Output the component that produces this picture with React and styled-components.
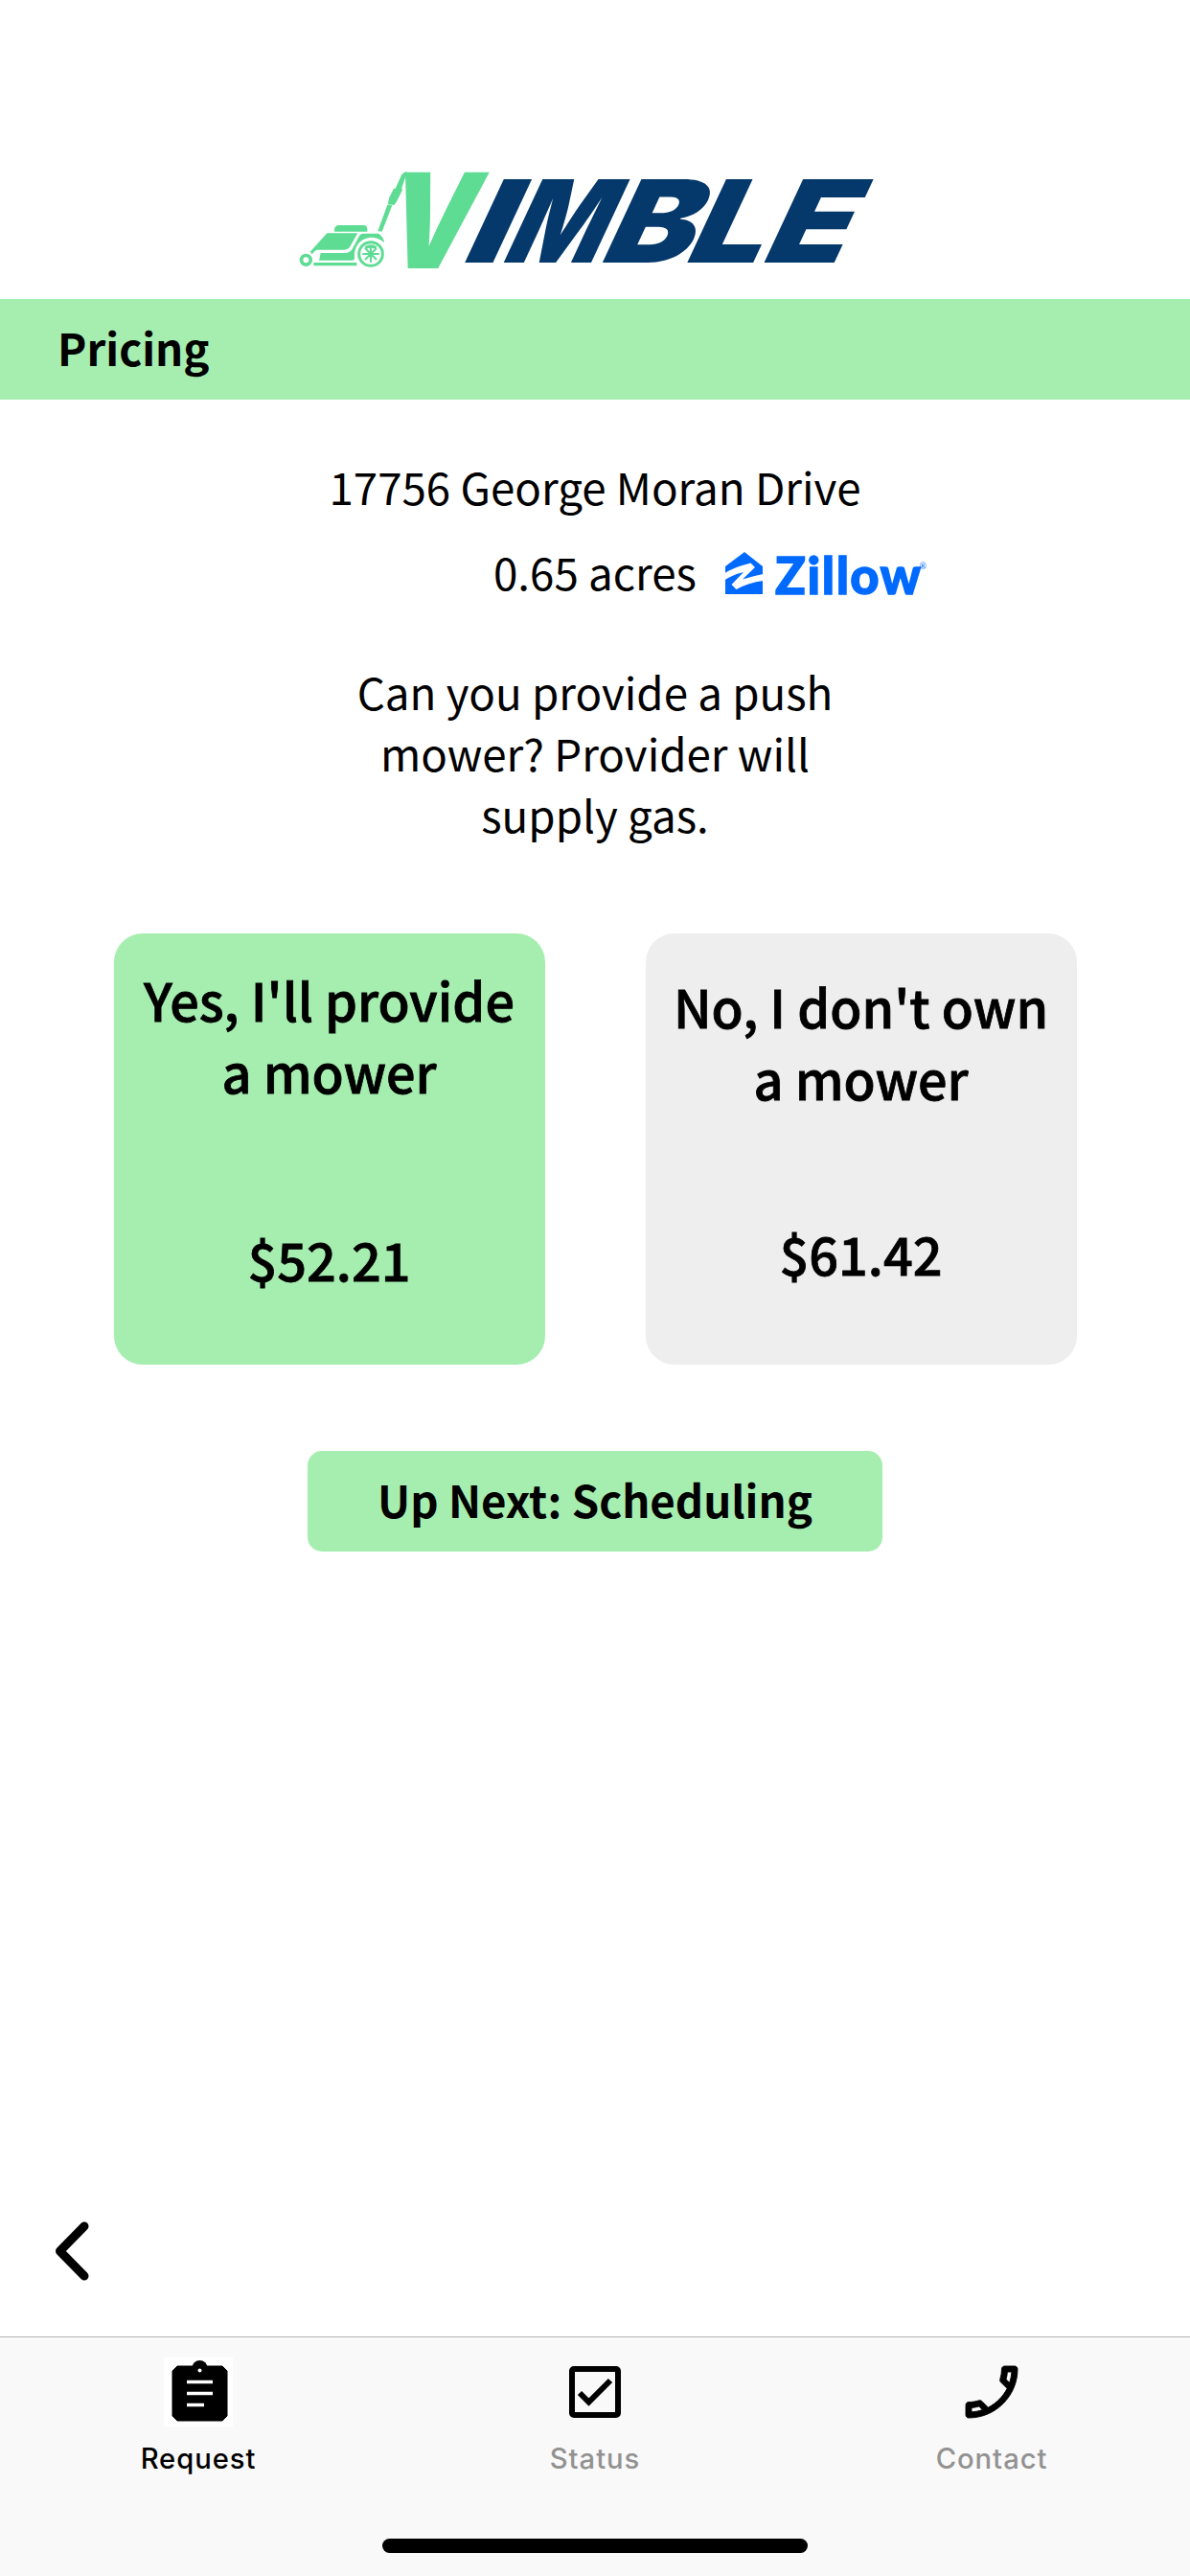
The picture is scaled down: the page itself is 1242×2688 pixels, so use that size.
import React from "react";
import styled, { createGlobalStyle } from "styled-components";

const Global = createGlobalStyle`
  * { box-sizing: border-box; }
  body { margin: 0; background: #fff; color: #000; }
`;

const Screen = styled.div`
  width: 1242px;
  height: 2688px;
  display: flex;
  flex-direction: column;
  background: #fff;
  font-family: "Noto Sans CJK JP", "Noto Sans", sans-serif;
`;
const Brand = styled.header`
  height: 312px;
  padding: 160px 0 0 300px;
  flex: none;
  svg { display: block; overflow: visible; }
`;
const TitleBar = styled.h1`
  margin: 0;
  height: 105px;
  flex: none;
  padding: 0 60px 5px;
  background: #a6eeb0;
  font-size: 45.6px;
  font-weight: 700;
  line-height: 100px;
`;
const Main = styled.main`
  flex: 1;
  display: flex;
  flex-direction: column;
  align-items: center;
`;
const Address = styled.div`
  margin-top: 58px;
  font-size: 45.7px;
  line-height: 64px;
  white-space: nowrap;
`;
const LotRow = styled.div`
  align-self: stretch;
  margin-top: 25px;
  padding-left: 515px;
  display: flex;
  gap: 30px;
  font-size: 45.7px;
  line-height: 64px;
  white-space: nowrap;
  svg { display: block; flex: none; margin-top: 3px; overflow: visible; }
`;
const LotSize = styled.span`
  width: 212px;
`;
const Question = styled.p`
  margin: 58px 0 0;
  width: 540px;
  font-size: 45.7px;
  line-height: 64px;
  text-align: center;
`;
const Options = styled.div`
  margin-top: 93px;
  display: flex;
  gap: 105px;
`;
const Option = styled.button`
  width: 450px;
  height: 450px;
  border: 0;
  border-radius: 30px;
  padding: ${(p) => (p.$selected ? "31px 0 73px" : "38px 0 79px")};
  background: ${(p) => (p.$selected ? "#a6eeb0" : "#eeeeee")};
  color: #000;
  display: flex;
  flex-direction: column;
  justify-content: space-between;
  align-items: center;
  font-family: inherit;
  font-size: 54px;
  font-weight: 500;
  line-height: 75px;
  text-align: center;
  white-space: pre-line;
  -webkit-text-stroke: 0.8px #000;
`;
const NextButton = styled.button`
  margin-top: 90px;
  width: 600px;
  height: 105px;
  padding: 0 0 5px;
  border: 0;
  border-radius: 15px;
  background: #a6eeb0;
  color: #000;
  font-family: inherit;
  font-size: 45.6px;
  font-weight: 700;
  line-height: 100px;
`;
const BackRow = styled.div`
  margin-top: auto;
  align-self: stretch;
  padding: 0 0 54px 50px;
  svg { display: block; }
`;
const TabBar = styled.nav`
  height: 250px;
  flex: none;
  border-top: 1px solid #b2b2b2;
  background: #f9f9f9;
  display: flex;
  flex-direction: column;
  align-items: center;
`;
const Tabs = styled.div`
  width: 100%;
  height: 210px;
  display: grid;
  grid-template-columns: repeat(3, 1fr);
`;
const Tab = styled.div`
  padding-top: 21px;
  display: flex;
  flex-direction: column;
  align-items: center;
  gap: 16px;
  font-family: Inter, sans-serif;
  font-size: 29.2px;
  font-weight: 500;
  line-height: 36px;
  letter-spacing: 0.95px;
  color: ${(p) => (p.$active ? "#000" : "#929292")};
`;
const TabIcon = styled.svg`
  display: block;
  width: 72px;
  height: 72px;
  background: ${(p) => (p.$active ? "#fff" : "transparent")};
`;
const HomeIndicator = styled.div`
  width: 444px;
  height: 15px;
  border-radius: 8px;
  background: #000;
`;

const Logo = () => (
  <svg width="640" height="140" viewBox="0 0 1920 420" role="img" aria-label="Vimble">
    <g fill="#5edc94">
      <path d="M147 243v-7q4-11 13-11h80q9 1 10 12v8H147z" />
      <path d="M124 250h96l-24 42q-6 10-18 10H92q-8 3-15 14l-6-8z" />
      <path d="M104 312h76q17 0 24-14l20-38q4-9 14-9h47q17 12 18 28-18-16-43-16-43 6-50 48v16q1 8-8 8H99z" />
      <path d="M82 342h135v10H82z" />
      <path d="M283 243l30-82 15 2-32 82z" />
      <path d="M314 160l5-22 14-28h5l20-44q8-9 16-8l-3 12-13 39 2 6-19 38-7 9z" />
    </g>
    <g fill="none" stroke="#5edc94">
      <circle cx="58" cy="334" r="14.500" strokeWidth="11" />
      <circle cx="261" cy="315" r="37" strokeWidth="9" />
      <path d="M261 315v-26M261 315v26M261 315h-26M261 315h26M261 315l-18-18M261 315l18-18M261 315l-18 18M261 315l18 18" strokeWidth="6" />
      <path d="M244 296q17-11 34 0" strokeWidth="10" />
    </g>
    <g fontFamily="Inter, sans-serif" fontWeight="900">
      <text transform="translate(0 359) skewX(-14.500) scale(.85 1)" x="334" y="0" fontSize="413" fill="#5edc94">V</text>
      <text transform="translate(0 342) skewX(-25) scale(1.240 1)" x="431" y="0" fontSize="359" fill="#05396b">I</text>
      <text transform="translate(0 342) skewX(-25) scale(.885 1)" x="748" y="0" fontSize="359" fill="#05396b">M</text>
      <text transform="translate(0 342) skewX(-25) scale(1.170 1)" x="826 1053 1259" y="0" fontSize="359" fill="#05396b">BLE</text>
    </g>
  </svg>
);

const Zillow = () => (
  <svg width="213" height="64" viewBox="0 0 213 64" role="img" aria-label="Zillow">
    <g fill="#006aff">
      <path d="M0 24L20 9l19 15v29H0z" />
      <path d="M-.5 31C9 25 18 23 26.500 20.500L31 25 18 37.500Q29 34 39.500 32V39Q24 41 11.500 48L6.500 43 19 30Q9 32 -.5 38z" fill="#fff" />
      <text x="52 85.500 100.800 115.800 130.300 161.500" y="52.700" fontFamily="Lato, sans-serif" fontWeight="900" fontSize="52.500" stroke="#006aff" strokeWidth="1.300">Zillow</text>
      <text x="202.500" y="27" fontFamily="Lato, sans-serif" fontSize="9">®</text>
    </g>
  </svg>
);

const ClipboardIcon = () => (
  <TabIcon $active viewBox="0 0 72 72">
    <circle cx="37.500" cy="11" r="8" />
    <path d="M14 9h47l5 5v47l-5 5H14l-5-5V14z" stroke="#000" strokeLinejoin="round" />
    <circle cx="37.500" cy="13.500" r="2" fill="#fff" />
    <path d="M24 25.500h27M24 37.500h27M24 49.500h18" stroke="#fff" strokeWidth="3.500" />
  </TabIcon>
);
const CheckIcon = () => (
  <TabIcon viewBox="0 0 72 72" fill="none" stroke="#000" strokeWidth="6">
    <rect x="12" y="12" width="48" height="48" rx="2" />
    <path d="M20 37l9.500 9.500L52 24" />
  </TabIcon>
);
const PhoneIcon = () => (
  <TabIcon viewBox="0 0 24 24">
    <path transform="translate(24 0) scale(-1 1)" stroke="#000" strokeWidth=".3" d="M6.540 5c.06.89.21 1.760.45 2.590l-1.200 1.200c-.41-1.200-.67-2.470-.76-3.790h1.510m9.860 12.020c.85.24 1.720.39 2.600.45v1.490c-1.320-.09-2.590-.35-3.800-.75l1.200-1.190M7.500 3H4c-.55 0-1 .45-1 1 0 9.390 7.610 17 17 17 .55 0 1-.45 1-1v-3.490c0-.55-.45-1-1-1-1.240 0-2.450-.2-3.570-.57-.36-.11-.75-.03-1.020.24l-2.200 2.200c-2.830-1.440-5.150-3.750-6.590-6.590l2.200-2.200c.28-.28.36-.67.25-1.020A11.360 11.360 0 0 1 8.500 4c0-.55-.45-1-1-1z" />
  </TabIcon>
);

export default function App() {
  return (
    <Screen>
      <Global />
      <Brand><Logo /></Brand>
      <TitleBar>Pricing</TitleBar>
      <Main>
        <Address>17756 George Moran Drive</Address>
        <LotRow>
          <LotSize>0.65 acres</LotSize>
          <Zillow />
        </LotRow>
        <Question>Can you provide a push mower? Provider will supply gas.</Question>
        <Options>
          <Option $selected>
            <span>{"Yes, I'll provide\na mower"}</span>
            <span>$52.21</span>
          </Option>
          <Option>
            <span>{"No, I don't own\na mower"}</span>
            <span>$61.42</span>
          </Option>
        </Options>
        <NextButton>Up Next: Scheduling</NextButton>
        <BackRow>
          <svg width="48" height="70" viewBox="0 0 48 70" fill="none" stroke="#000" strokeWidth="9" strokeLinecap="round" strokeLinejoin="round">
            <path d="M38 9L12.500 35 38 61" />
          </svg>
        </BackRow>
      </Main>
      <TabBar>
        <Tabs>
          <Tab $active><ClipboardIcon />Request</Tab>
          <Tab><CheckIcon />Status</Tab>
          <Tab><PhoneIcon />Contact</Tab>
        </Tabs>
        <HomeIndicator />
      </TabBar>
    </Screen>
  );
}
